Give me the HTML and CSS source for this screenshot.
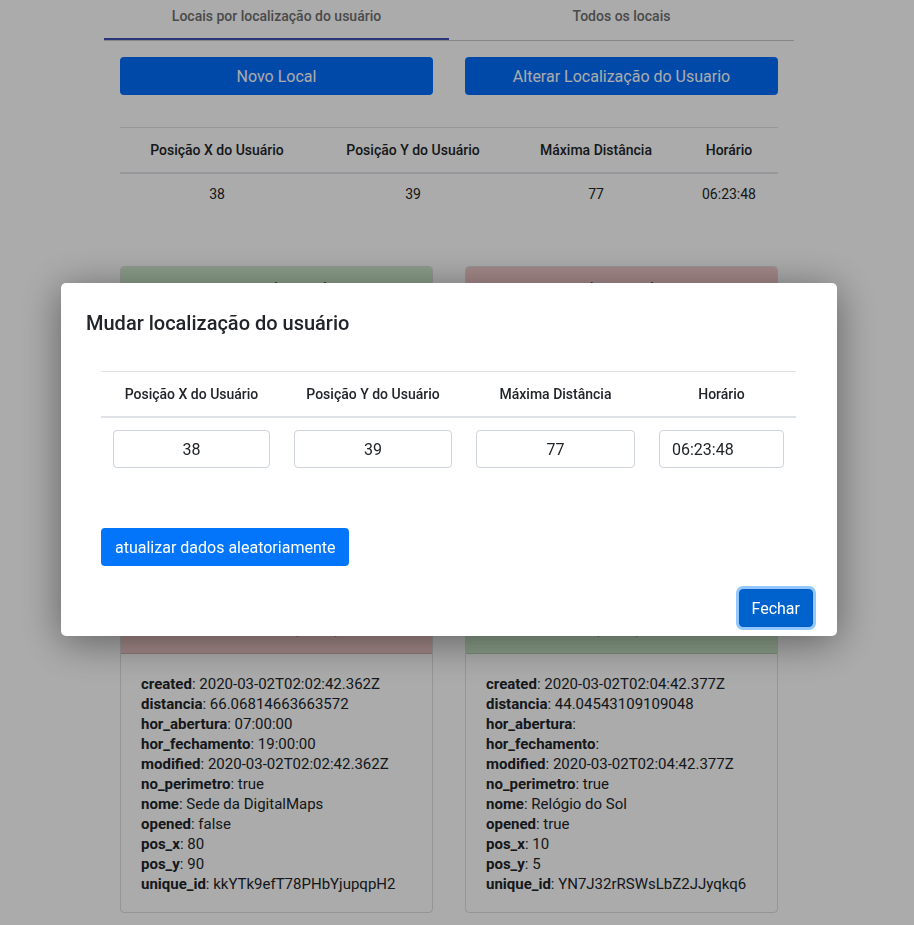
FILE: index.html
```html
<!DOCTYPE html>
<html lang="pt-BR">
<head>
<meta charset="utf-8">
<title>Locais</title>
<link rel="stylesheet" href="styles.css">
</head>
<body>
<div class="page">
  <div class="container">
    <div class="tabs">
      <div class="tab active">Locais por localização do usuário</div>
      <div class="tab">Todos os locais</div>
    </div>
    <div class="content">
      <div class="actions">
        <button class="btn-main">Novo Local</button>
        <button class="btn-main">Alterar Localização do Usuario</button>
      </div>
      <table class="info">
        <colgroup>
          <col class="p1"><col class="p2"><col class="p3"><col class="p4">
        </colgroup>
        <thead>
          <tr><th>Posição X do Usuário</th><th>Posição Y do Usuário</th><th>Máxima Distância</th><th>Horário</th></tr>
        </thead>
        <tbody>
          <tr><td>38</td><td>39</td><td>77</td><td>06:23:48</td></tr>
        </tbody>
      </table>
      <div class="cards">
        <div class="card">
          <div class="card-header green top">Parque da Cidade (aberto)</div>
          <div class="card-body">
            <div><b>created</b>: 2020-03-02T02:01:12.118Z</div>
            <div><b>distancia</b>: 21.18869497954339</div>
            <div><b>hor_abertura</b>: 06:00:00</div>
            <div><b>hor_fechamento</b>: 22:00:00</div>
            <div><b>modified</b>: 2020-03-02T02:01:12.118Z</div>
            <div><b>no_perimetro</b>: true</div>
            <div><b>nome</b>: Parque da Cidade</div>
            <div><b>opened</b>: true</div>
            <div><b>pos_x</b>: 20</div>
            <div><b>pos_y</b>: 30</div>
            <div><b>unique_id</b>: aQ83nLp2Xy7VbRt5KmWz</div>
          </div>
        </div>
        <div class="card">
          <div class="card-header red top">Loja da Maria (fechado)</div>
          <div class="card-body">
            <div><b>created</b>: 2020-03-02T02:03:22.251Z</div>
            <div><b>distancia</b>: 35.35533905932738</div>
            <div><b>hor_abertura</b>: 08:00:00</div>
            <div><b>hor_fechamento</b>: 18:00:00</div>
            <div><b>modified</b>: 2020-03-02T02:03:22.251Z</div>
            <div><b>no_perimetro</b>: true</div>
            <div><b>nome</b>: Loja da Maria</div>
            <div><b>opened</b>: false</div>
            <div><b>pos_x</b>: 60</div>
            <div><b>pos_y</b>: 15</div>
            <div><b>unique_id</b>: Hs72KdPq0LmZ4xWvTn8B</div>
          </div>
        </div>
        <div class="card">
          <div class="card-header red">Sede da DigitalMaps (66 m)</div>
          <div class="card-body">
            <div><b>created</b>: 2020-03-02T02:02:42.362Z</div>
            <div><b>distancia</b>: 66.06814663663572</div>
            <div><b>hor_abertura</b>: 07:00:00</div>
            <div><b>hor_fechamento</b>: 19:00:00</div>
            <div><b>modified</b>: 2020-03-02T02:02:42.362Z</div>
            <div><b>no_perimetro</b>: true</div>
            <div><b>nome</b>: Sede da DigitalMaps</div>
            <div><b>opened</b>: false</div>
            <div><b>pos_x</b>: 80</div>
            <div><b>pos_y</b>: 90</div>
            <div><b>unique_id</b>: kkYTk9efT78PHbYjupqpH2</div>
          </div>
        </div>
        <div class="card">
          <div class="card-header green">Relógio do Sol (44 m)</div>
          <div class="card-body">
            <div><b>created</b>: 2020-03-02T02:04:42.377Z</div>
            <div><b>distancia</b>: 44.04543109109048</div>
            <div><b>hor_abertura</b>:</div>
            <div><b>hor_fechamento</b>:</div>
            <div><b>modified</b>: 2020-03-02T02:04:42.377Z</div>
            <div><b>no_perimetro</b>: true</div>
            <div><b>nome</b>: Relógio do Sol</div>
            <div><b>opened</b>: true</div>
            <div><b>pos_x</b>: 10</div>
            <div><b>pos_y</b>: 5</div>
            <div><b>unique_id</b>: YN7J32rRSWsLbZ2JJyqkq6</div>
          </div>
        </div>
      </div>
    </div>
  </div>
</div>

<div class="backdrop"></div>

<div class="modal-wrap">
  <div class="modal">
    <div class="modal-header">
      <h5 class="modal-title">Mudar localização do usuário</h5>
    </div>
    <div class="modal-body">
      <table class="edit">
        <colgroup>
          <col class="m1"><col class="m2"><col class="m3"><col class="m4">
        </colgroup>
        <thead>
          <tr><th>Posição X do Usuário</th><th>Posição Y do Usuário</th><th>Máxima Distância</th><th>Horário</th></tr>
        </thead>
        <tbody>
          <tr>
            <td><input class="field" type="text" value="38"></td>
            <td><input class="field" type="text" value="39"></td>
            <td><input class="field" type="text" value="77"></td>
            <td><input class="field left" type="text" value="06:23:48"></td>
          </tr>
        </tbody>
      </table>
      <button class="btn-random">atualizar dados aleatoriamente</button>
    </div>
    <div class="modal-footer">
      <button class="btn-close">Fechar</button>
    </div>
  </div>
</div>
</body>
</html>
```

FILE: styles.css
```css
* { box-sizing: border-box; }

body {
  margin: 0;
  font-family: Roboto, "Noto Sans", sans-serif;
  color: #212529;
  background: #fff;
}

.page { width: 898px; }

.container {
  width: 690px;
  margin: 0 auto;
}

.tabs {
  display: flex;
  border-bottom: 1px solid #c8c8c8;
}

.tab {
  flex: 1;
  height: 40px;
  padding-top: 6px;
  text-align: center;
  font-size: 14px;
  font-weight: 500;
  line-height: 20px;
  color: #6f6f6f;
}

.tab.active { border-bottom: 2px solid #3f51b5; }

.content { padding: 16px 16px 0; }

.actions {
  display: grid;
  grid-template-columns: 1fr 1fr;
  column-gap: 32px;
}

.btn-main {
  height: 38px;
  border: 0;
  border-radius: 4px;
  background: #006efd;
  color: #fff;
  font-family: Roboto, sans-serif;
  font-size: 16px;
}

.info {
  width: 100%;
  margin-top: 32px;
  border-collapse: collapse;
  font-size: 14px;
  line-height: 21px;
  text-align: center;
}

.info .p1 { width: 194px; }
.info .p2 { width: 198px; }
.info .p3 { width: 168px; }
.info .p4 { width: 98px; }

.info th {
  font-weight: 500;
  padding: 12px 6px 11px;
  border-top: 1px solid #dee2e6;
  border-bottom: 2px solid #dee2e6;
}

.info td { padding: 10px 6px 12px; }

.cards {
  margin-top: 49px;
  display: grid;
  grid-template-columns: 1fr 1fr;
  column-gap: 32px;
  row-gap: 29px;
}

.card {
  border: 1px solid rgba(0, 0, 0, 0.125);
  border-radius: 4px;
  overflow: hidden;
}

.card-header {
  padding: 11px 20px 13px;
  font-size: 16px;
  font-weight: 700;
  line-height: 24px;
  border-bottom: 1px solid rgba(0, 0, 0, 0.125);
}

.card-header.green { background: #cfeccd; }
.card-header.red { background: #f4cccd; }

.card-body {
  padding: 20px 20px 18px;
  font-size: 15px;
  line-height: 20px;
}

.card-body b { font-weight: 700; }

.backdrop {
  position: fixed;
  inset: 0;
  background: rgba(0, 0, 0, 0.33);
}

.modal-wrap {
  position: fixed;
  top: 0;
  left: 0;
  width: 898px;
  display: flex;
  justify-content: center;
  padding-top: 283px;
}

.modal {
  width: 776px;
  background: #fff;
  border-radius: 5px;
  box-shadow: 0 6px 40px rgba(0, 0, 0, 0.45);
}

.modal-header { padding: 25px 25px 0; }

.modal-title {
  margin: 0;
  font-size: 20px;
  font-weight: 500;
  line-height: 30px;
  color: #212529;
}

.modal-body { padding: 33px 41px 0 40px; }

.edit {
  width: 100%;
  border-collapse: collapse;
  font-size: 14px;
  line-height: 21px;
  text-align: center;
  table-layout: fixed;
}

.edit .m1 { width: 181px; }
.edit .m2 { width: 182px; }
.edit .m3 { width: 183px; }
.edit .m4 { width: 149px; }

.edit th {
  font-weight: 500;
  padding: 12px 12px 11px;
  border-top: 1px solid #dee2e6;
  border-bottom: 2px solid #dee2e6;
}

.edit td { padding: 12px; }

.field {
  display: block;
  width: 100%;
  height: 38px;
  border: 1px solid #ced4da;
  border-radius: 4px;
  font-family: Roboto, sans-serif;
  font-size: 16px;
  color: #212529;
  text-align: center;
  padding: 6px 12px;
}

.field.left { text-align: left; }

.btn-random {
  display: block;
  margin-top: 48px;
  height: 38px;
  padding: 0 14px;
  border: 0;
  border-radius: 4px;
  background: #0275fa;
  color: #fff;
  font-family: Roboto, sans-serif;
  font-size: 16px;
}

.modal-footer {
  display: flex;
  justify-content: flex-end;
  padding: 23px 24px 9px;
}

.btn-close {
  height: 38px;
  padding: 0 12px;
  border: 1px solid #005cbf;
  border-radius: 4px;
  background: #0062cc;
  color: #fff;
  font-family: Roboto, sans-serif;
  font-size: 16px;
  box-shadow: 0 0 0 3px rgba(38, 143, 255, 0.5);
}
```
